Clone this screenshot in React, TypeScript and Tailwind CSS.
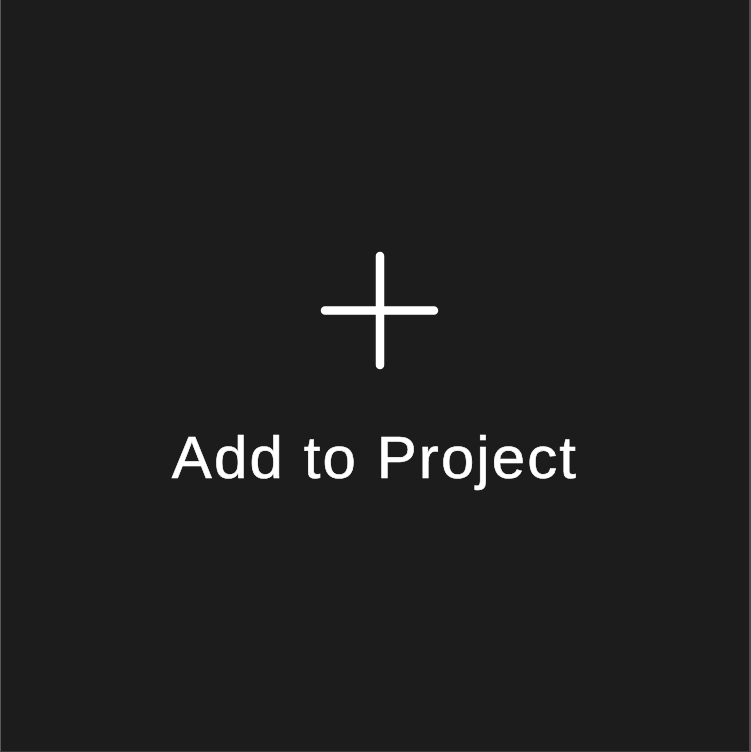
export default function App() {
  return (
    <div className="h-[752px] w-[751px] bg-[#1c1c1c] border-l border-r-2 border-b border-l-[#5a5a5a] border-r-[#4a4a4a] border-b-[#3a3a3a] flex flex-col items-center">
      <svg className="mt-[251px] ml-[10px]" width="120" height="120" viewBox="0 0 120 120" fill="none">
        <path d="M60 5 V114 M5 59.5 H114" stroke="#ffffff" strokeWidth="8.5" strokeLinecap="round" />
      </svg>
      <div
        className="mt-[57px] text-white text-[60px] leading-none tracking-[2.1px] [-webkit-text-stroke:0.6px_white]"
        style={{ fontFamily: '"Liberation Sans", Arial, sans-serif' }}
      >
        Add to Project
      </div>
    </div>
  );
}
